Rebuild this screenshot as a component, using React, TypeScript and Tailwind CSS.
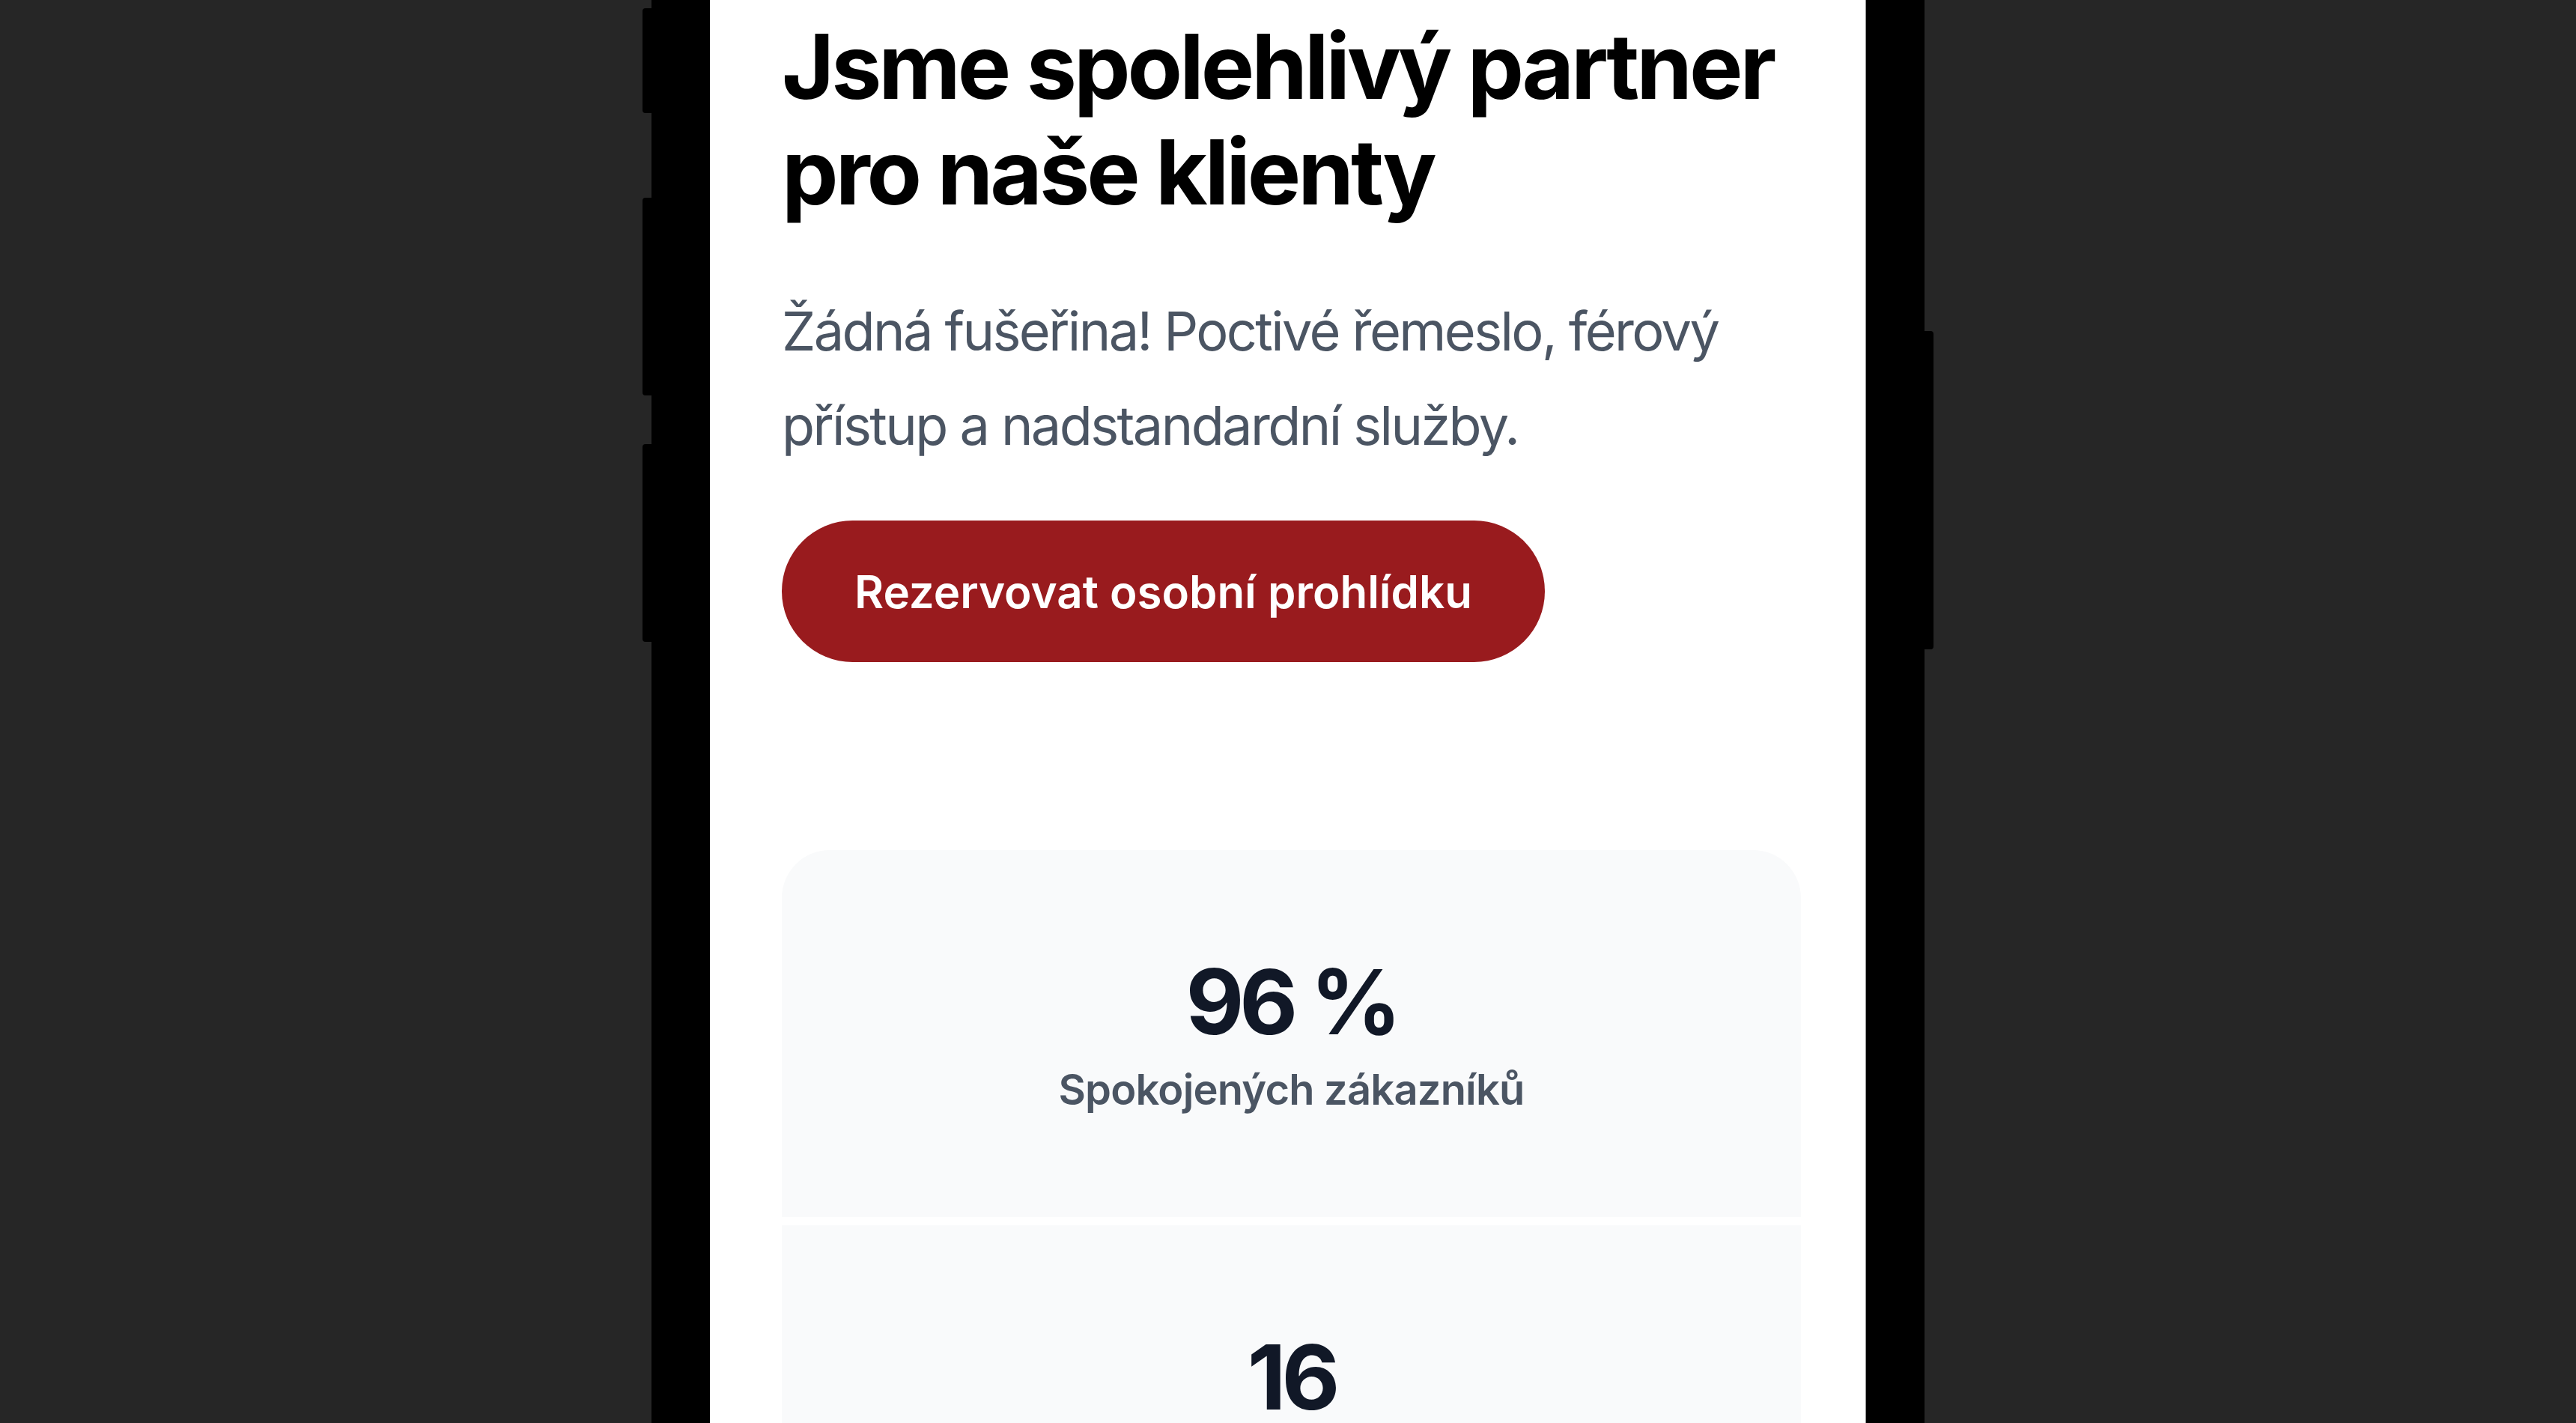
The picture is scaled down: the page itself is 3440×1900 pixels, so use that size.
import React from 'react';

interface Stat {
  value: string;
  label: string;
}

const stats: Stat[] = [
  { value: '96 %', label: 'Spokojených zákazníků' },
  { value: '16', label: 'Let zkušeností na trhu' },
];

// boční tlačítka telefonu (levá strana)
const LeftButtons: React.FC = () => (
  <div className="flex flex-col w-[12px] pt-[11px]">
    <div className="h-[140px] bg-black rounded-l-[4px]" />
    <div className="h-[264px] mt-[113px] bg-black rounded-l-[4px]" />
    <div className="h-[264px] mt-[65px] bg-black rounded-l-[4px]" />
  </div>
);

const RightButtons: React.FC = () => (
  <div className="flex flex-col w-[12px] pt-[442px]">
    <div className="h-[425px] bg-black rounded-r-[4px]" />
  </div>
);

const StatCard: React.FC<{ stat: Stat }> = ({ stat }) => (
  <div className="h-[490px] bg-[#f9fafb] flex flex-col items-center justify-center">
    <div className="text-[120px] leading-[144px] font-bold text-[#111827] tracking-[-6px]">{stat.value}</div>
    <div className="mt-[5px] text-[56px] leading-[80px] font-semibold text-[#4b5563] tracking-[-0.8px]">
      {stat.label}
    </div>
  </div>
);

export default function App() {
  return (
    <div className="w-full h-[1900px] overflow-hidden bg-[#262626] flex justify-center items-start font-['Inter','Noto_Sans',sans-serif]">
      <LeftButtons />

      {/* rám telefonu */}
      <div className="w-[1700px] h-[1900px] bg-black px-[78px]">
        <div className="h-full bg-white overflow-hidden border-r border-[#8c8c8c] pl-[96px] pr-[86px] pt-[18px]">
          {/* nadpis */}
          <h1 className="text-[120px] leading-[141px] font-bold text-black tracking-[-4px]">
            Jsme spolehlivý partner
            <br />
            pro naše klienty
          </h1>

          {/* popis */}
          <p className="mt-[79px] text-[72px] leading-[126px] text-[#4b5563] tracking-[-2.6px]">
            Žádná fušeřina! Poctivé řemeslo, férový přístup a nadstandardní služby.
          </p>

          {/* tlačítko */}
          <button className="mt-[64px] w-[1019px] h-[189px] rounded-full bg-[#991b1e] text-white text-[60px] leading-[80px] font-semibold flex items-center justify-center">
            Rezervovat osobní prohlídku
          </button>

          {/* statistiky */}
          <div className="mt-[251px] rounded-[64px] overflow-hidden bg-white flex flex-col gap-[11px]">
            {stats.map((s) => (
              <StatCard key={s.value} stat={s} />
            ))}
          </div>
        </div>
      </div>

      <RightButtons />
    </div>
  );
}
